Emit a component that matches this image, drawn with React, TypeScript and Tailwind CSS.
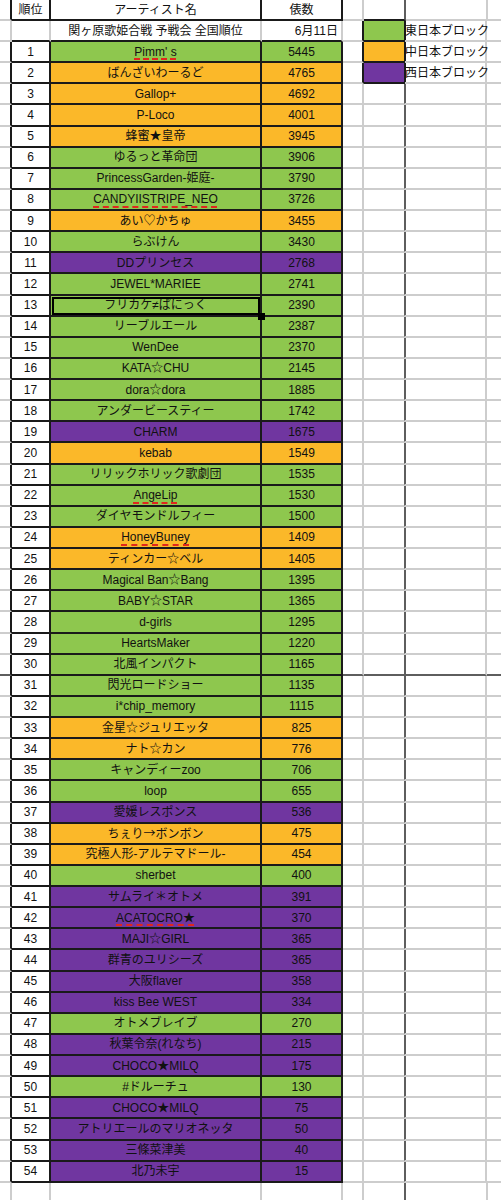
import React from "react"

type Block = "g" | "o" | "p"

const fills: Record<Block, string> = {
  g: "bg-[#8ec74e]",
  o: "bg-[#fbb829]",
  p: "bg-[#7036a0]",
}

// name, votes, block, spellcheck underline
const artists: [string, number, Block, boolean?][] = [
  ["Pimm' s", 5445, "g", true],
  ["ばんざいわーるど", 4765, "o"],
  ["Gallop+", 4692, "o"],
  ["P-Loco", 4001, "o"],
  ["蜂蜜★皇帝", 3945, "o"],
  ["ゆるっと革命団", 3906, "g"],
  ["PrincessGarden-姫庭-", 3790, "g"],
  ["CANDYIISTRIPE_NEO", 3726, "g", true],
  ["あい♡かちゅ", 3455, "o"],
  ["らぶけん", 3430, "g"],
  ["DDプリンセス", 2768, "p"],
  ["JEWEL*MARIEE", 2741, "g"],
  ["フリカケ≠ぱにっく", 2390, "g"],
  ["リーブルエール", 2387, "g"],
  ["WenDee", 2370, "g"],
  ["KATA☆CHU", 2145, "g"],
  ["dora☆dora", 1885, "g"],
  ["アンダービースティー", 1742, "g"],
  ["CHARM", 1675, "p"],
  ["kebab", 1549, "o"],
  ["リリックホリック歌劇団", 1535, "g"],
  ["AngeLip", 1530, "g", true],
  ["ダイヤモンドルフィー", 1500, "g"],
  ["HoneyBuney", 1409, "o", true],
  ["ティンカー☆ベル", 1405, "o"],
  ["Magical Ban☆Bang", 1395, "g"],
  ["BABY☆STAR", 1365, "g"],
  ["d-girls", 1295, "g"],
  ["HeartsMaker", 1220, "g"],
  ["北風インパクト", 1165, "g"],
  ["閃光ロードショー", 1135, "g"],
  ["i*chip_memory", 1115, "g"],
  ["金星☆ジュリエッタ", 825, "o"],
  ["ナト☆カン", 776, "o"],
  ["キャンディーzoo", 706, "g"],
  ["loop", 655, "g"],
  ["愛媛レスポンス", 536, "p"],
  ["ちぇり→ボンボン", 475, "o"],
  ["究極人形-アルテマドール-", 454, "o"],
  ["sherbet", 400, "g"],
  ["サムライ＊オトメ", 391, "p"],
  ["ACATOCRO★", 370, "p", true],
  ["MAJI☆GIRL", 365, "p"],
  ["群青のユリシーズ", 365, "p"],
  ["大阪flaver", 358, "p"],
  ["kiss Bee WEST", 334, "p"],
  ["オトメブレイブ", 270, "g"],
  ["秋葉令奈(れなち)", 215, "p"],
  ["CHOCO★MILQ", 175, "p"],
  ["#ドルーチュ", 130, "g"],
  ["CHOCO★MILQ", 75, "p"],
  ["アトリエールのマリオネッタ", 50, "p"],
  ["三條菜津美", 40, "p"],
  ["北乃未宇", 15, "p"],
]

const legend: { label: string; fill: string }[] = [
  { label: "東日本ブロック", fill: "bg-[#8ec74e]" },
  { label: "中日本ブロック", fill: "bg-[#fbb829]" },
  { label: "西日本ブロック", fill: "bg-[#7036a0]" },
]

const center = "flex items-center justify-center whitespace-nowrap"

// the arrow glyph in Liberation Sans is tiny, so take it from the CJK font
function Name({ text }: { text: string }) {
  const parts = text.split("→")
  if (parts.length === 1) return <>{text}</>
  return (
    <>
      {parts[0]}
      <span className="font-['Noto_Sans_CJK_JP',sans-serif]">→</span>
      {parts[1]}
    </>
  )
}

export default function App() {
  return (
    <div className="w-[501px] h-[1200px] overflow-hidden bg-white text-[12px] text-[#111] font-['Liberation_Sans','Noto_Sans_CJK_JP',sans-serif]">
      {/* header */}
      <div className="flex h-[21px]">
        <div className="w-[12px] shrink-0 border-r-2 border-r-[#1a1a1a] border-b-2 border-b-[#cdcdcd]" />
        <div className={`w-[39px] shrink-0 border-r-2 border-b-2 border-[#1a1a1a] ${center}`}>順位</div>
        <div className={`w-[211px] shrink-0 border-r-2 border-b-2 border-[#1a1a1a] ${center}`}>アーティスト名</div>
        <div className={`w-[81px] shrink-0 border-r-2 border-b-2 border-[#1a1a1a] ${center}`}>俵数</div>
        <div className="w-[21px] shrink-0 border-r-2 border-r-[#cdcdcd] border-b-2 border-b-[#cdcdcd]" />
        <div className="w-[42px] shrink-0 border-r-2 border-r-[#5e5e5e] border-b-2 border-b-[#1a1a1a]" />
        <div className="w-[82px] shrink-0 border-r-2 border-r-[#cdcdcd] border-b-2 border-b-[#cdcdcd]" />
        <div className="flex-1 border-b-2 border-b-[#cdcdcd]" />
      </div>

      {/* subtitle */}
      <div className="flex h-[21px]">
        <div className="w-[12px] shrink-0 border-r-2 border-r-[#cdcdcd] border-b-2 border-b-[#cdcdcd]" />
        <div className="w-[39px] shrink-0 border-r-2 border-r-[#cdcdcd] border-b-2 border-b-[#1a1a1a]" />
        <div className={`w-[211px] shrink-0 border-r-2 border-r-[#cdcdcd] border-b-2 border-b-[#1a1a1a] ${center}`}>
          関ヶ原歌姫合戦 予戦会 全国順位
        </div>
        <div className="w-[81px] shrink-0 border-r-2 border-r-[#cdcdcd] border-b-2 border-b-[#1a1a1a] flex items-center justify-end pr-[3px] whitespace-nowrap">
          6月11日
        </div>
        <div className="w-[21px] shrink-0 border-r-2 border-r-[#1a1a1a] border-b-2 border-b-[#cdcdcd]" />
        <div className={`w-[42px] shrink-0 border-r-2 border-b-2 border-[#1a1a1a] ${legend[0].fill}`} />
        <div className="w-[82px] shrink-0 border-r-2 border-r-[#cdcdcd] border-b-2 border-b-[#cdcdcd] flex items-center whitespace-nowrap -ml-[1px]">
          {legend[0].label}
        </div>
        <div className="flex-1 border-b-2 border-b-[#cdcdcd]" />
      </div>

      {artists.map(([name, votes, block, marked], i) => {
        const leg = legend[i + 1]
        const frozen = i === 29
        const side = frozen ? "border-b-[#5e5e5e]" : "border-b-[#cdcdcd]"
        return (
          <div key={i} className="flex h-[21.13px]">
            <div className={`w-[12px] shrink-0 border-r-2 border-r-[#1a1a1a] border-b-2 ${side}`} />
            <div className={`w-[39px] shrink-0 border-r-2 border-b-2 border-[#1a1a1a] bg-white ${center}`}>{i + 1}</div>
            <div className={`relative w-[211px] shrink-0 border-r-2 border-b-2 border-[#1a1a1a] ${fills[block]} ${center}`}>
              <span className={marked ? "underline decoration-dashed decoration-[#e0261d] decoration-[1.5px] underline-offset-[3px]" : ""}>
                <Name text={name} />
              </span>
              {i === 12 && (
                <>
                  <div className="absolute left-[1px] top-[1px] right-0 bottom-0 border-2 border-black" />
                  <div className="absolute -right-[5px] -bottom-[5px] w-[7px] h-[7px] bg-black z-10" />
                </>
              )}
            </div>
            <div className={`w-[81px] shrink-0 border-r-2 border-b-2 border-[#1a1a1a] ${fills[block]} ${center}`}>{votes}</div>
            <div className={`w-[21px] shrink-0 border-r-2 border-b-2 ${side} ${leg ? "border-r-[#1a1a1a]" : "border-r-[#cdcdcd]"}`} />
            {leg ? (
              <div className={`w-[42px] shrink-0 border-r-2 border-b-2 border-[#1a1a1a] ${leg.fill}`} />
            ) : (
              <div className={`w-[42px] shrink-0 border-r-2 border-r-[#5e5e5e] border-b-2 ${side}`} />
            )}
            <div className={`w-[82px] shrink-0 border-r-2 border-r-[#cdcdcd] border-b-2 ${side} flex items-center whitespace-nowrap -ml-[1px]`}>
              {leg?.label}
            </div>
            <div className={`flex-1 border-b-2 ${side}`} />
          </div>
        )
      })}

      {/* empty row below the table */}
      <div className="flex h-[30px]">
        <div className="w-[12px] shrink-0 border-r-2 border-r-[#cdcdcd]" />
        <div className="w-[39px] shrink-0 border-r-2 border-r-[#cdcdcd]" />
        <div className="w-[211px] shrink-0 border-r-2 border-r-[#cdcdcd]" />
        <div className="w-[81px] shrink-0 border-r-2 border-r-[#cdcdcd]" />
        <div className="w-[21px] shrink-0 border-r-2 border-r-[#cdcdcd]" />
        <div className="w-[42px] shrink-0 border-r-2 border-r-[#5e5e5e]" />
        <div className="w-[82px] shrink-0 border-r-2 border-r-[#cdcdcd]" />
        <div className="flex-1" />
      </div>
    </div>
  )
}
